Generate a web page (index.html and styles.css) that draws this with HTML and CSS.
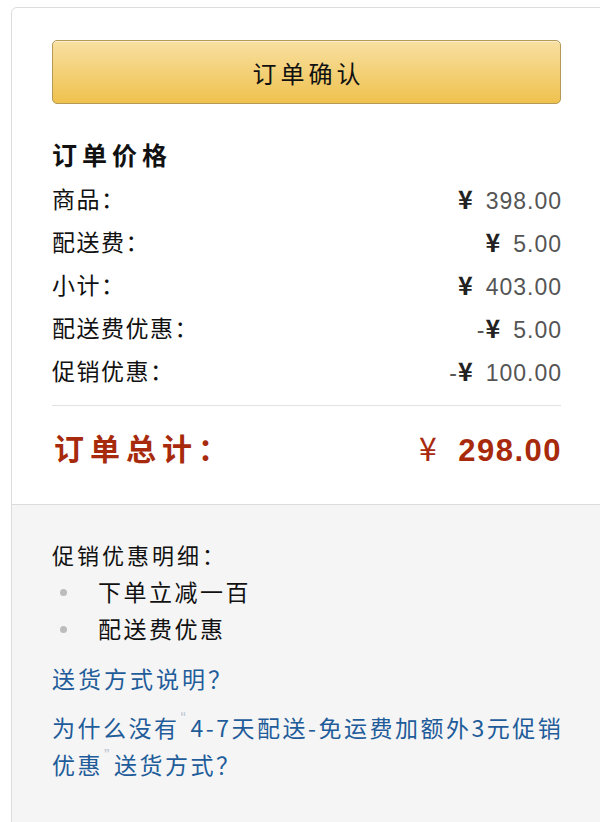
FILE: index.html
```html
<!DOCTYPE html>
<html lang="zh-CN">
<head>
<meta charset="utf-8">
<title>订单确认</title>
<link rel="stylesheet" href="styles.css">
</head>
<body>
<div class="card">
  <div class="top">
    <button class="confirm">订单确认</button>
    <h3 class="title">订单价格</h3>
    <div class="row"><span class="label">商品：</span><span class="amt"><span class="yen">¥</span>398.00</span></div>
    <div class="row"><span class="label">配送费：</span><span class="amt"><span class="yen">¥</span>5.00</span></div>
    <div class="row"><span class="label">小计：</span><span class="amt"><span class="yen">¥</span>403.00</span></div>
    <div class="row"><span class="label">配送费优惠：</span><span class="amt">-<span class="yen">¥</span>5.00</span></div>
    <div class="row"><span class="label">促销优惠：</span><span class="amt">-<span class="yen">¥</span>100.00</span></div>
    <div class="divider"></div>
    <div class="total"><span class="tlabel">订单总计：</span><span class="tamt"><span class="tyen">¥</span>298.00</span></div>
  </div>
  <div class="bottom">
    <div class="promo-title">促销优惠明细：</div>
    <ul class="promo-list">
      <li>下单立减一百</li>
      <li>配送费优惠</li>
    </ul>
    <a class="link first" href="#">送货方式说明？</a>
    <a class="link" href="#">为什么没有<span class="q">“</span>4-7天配送-免运费加额外3元促销优惠<span class="q">”</span>送货方式？</a>
  </div>
</div>
</body>
</html>
```

FILE: styles.css
```css
html, body {
  margin: 0;
  padding: 0;
  background: #fff;
  overflow: hidden;
}
body {
  font-family: "Noto Sans CJK SC", "Liberation Sans", sans-serif;
  color: #222;
}
.card {
  margin: 7px 0 0 11px;
  width: 620px;
  border: 1px solid #dcdcdc;
  border-radius: 6px 0 0 0;
  min-height: 830px;
  display: flex;
  flex-direction: column;
}
.top {
  padding: 32px 0 32px 40px;
  width: 509px;
}
.confirm {
  display: block;
  width: 509px;
  height: 64px;
  border: 1px solid #b49a55;
  border-radius: 5px;
  background: linear-gradient(to bottom, #f8e0a2 0%, #f3cf73 55%, #efc14e 100%);
  box-shadow: inset 0 1px 0 rgba(255,255,255,0.5);
  font-family: "Noto Sans CJK SC", sans-serif;
  font-size: 24px;
  letter-spacing: 4px;
  text-indent: 4px;
  color: #111;
  padding: 0;
  cursor: pointer;
}
.title {
  margin: 28px 0 0 0;
  font-size: 25px;
  font-weight: bold;
  letter-spacing: 5px;
  line-height: 44px;
  color: #111;
}
.row {
  display: flex;
  justify-content: space-between;
  align-items: center;
  height: 43px;
  font-size: 23px;
  letter-spacing: 1.5px;
  color: #111;
}
.amt {
  font-family: "Liberation Sans", sans-serif;
  font-size: 23px;
  letter-spacing: 1px;
  color: #555;
  margin-right: -1px;
}
.yen {
  font-family: "Noto Sans CJK SC", sans-serif;
  font-size: 25px;
  color: #222;
  font-weight: bold;
  margin-right: 12px;
}
.divider {
  margin-top: 14px;
  height: 1px;
  background: #e3e3e3;
}
.total {
  display: flex;
  justify-content: space-between;
  align-items: center;
  margin-top: 16px;
  height: 50px;
  color: #a82a0c;
}
.tlabel {
  font-size: 30px;
  font-weight: bold;
  letter-spacing: 6px;
  margin-left: 2px;
}
.tamt {
  font-family: "Liberation Sans", sans-serif;
  font-size: 31px;
  font-weight: bold;
  letter-spacing: 1.5px;
  margin-right: -1px;
}
.tyen {
  font-family: "Noto Sans CJK SC", sans-serif;
  font-weight: normal;
  font-size: 32px;
  margin-right: 20px;
}
.bottom {
  flex: 1;
  background: #f5f5f5;
  border-top: 1px solid #dcdcdc;
  padding: 30px 0 0 40px;
}
.promo-title {
  width: 509px;
  font-size: 22px;
  line-height: 38px;
  letter-spacing: 3px;
  color: #111;
}
.promo-list {
  list-style: none;
  margin: 0;
  padding: 0;
}
.promo-list li {
  position: relative;
  padding-left: 46px;
  font-size: 23px;
  line-height: 37px;
  letter-spacing: 2.5px;
  color: #111;
}
.promo-list li::before {
  content: "";
  position: absolute;
  left: 8px;
  top: 16px;
  width: 7px;
  height: 7px;
  border-radius: 50%;
  background: #bcbcbc;
}
.link {
  display: block;
  width: 512px;
  font-size: 23px;
  line-height: 37px;
  letter-spacing: 2.5px;
  color: #1f5c9a;
  text-decoration: none;
}
.link.first {
  margin-top: 13px;
  margin-bottom: 12px;
  letter-spacing: 3px;
}
.q {
  display: inline-block;
  width: 8px;
  height: 20px;
  overflow: hidden;
  vertical-align: top;
  margin: 0 2px 0 1px;
  font-family: "Liberation Sans", sans-serif;
  color: #b8c4d0;
  font-size: 16px;
  letter-spacing: 0;
  line-height: 20px;
}
```
